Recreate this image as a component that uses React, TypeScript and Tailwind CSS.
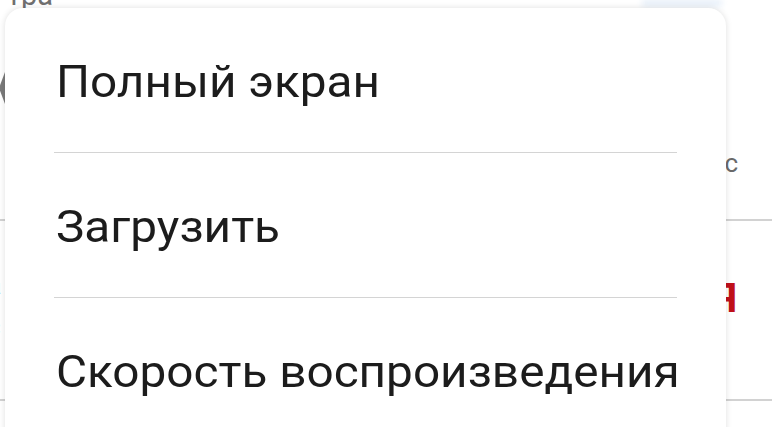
import React from "react";

const items = ["Полный экран", "Загрузить", "Скорость воспроизведения"];

const Background = () => {
  return (
    <div className="w-full h-full flex flex-col">
      {/* upper block */}
      <div className="h-[219px] flex flex-col">
        <div className="flex items-start justify-between h-[12px]">
          <span className="-mt-[22px] ml-[7px] text-[29px] text-[#6f6f6f] leading-[34px]">тра</span>
          <div className="mr-[50px] w-[80px] h-[6px] bg-[#e3edf9] blur-[3px]" />
        </div>
        <div className="flex justify-between mt-[60px]">
          <svg width="8" height="32" viewBox="0 0 8 32" className="-ml-[1px]">
            <polygon points="6,0 0,16 6,32" fill="#7a7a7a" />
          </svg>
        </div>
        <div className="flex justify-end mt-[44px] pr-[34px]">
          <span className="text-[26px] leading-[30px] text-[#6a6a6a]">ос</span>
        </div>
      </div>
      <div className="h-[2px] bg-[#d2d2d2]" />
      {/* lower block */}
      <div className="h-[178px] flex flex-col">
        <div className="flex justify-between items-start mt-[48px]">
          <span className="-ml-[14px] text-[28px] leading-[32px] font-bold text-[#111]">а</span>
          <span className="mt-[8px] mr-[35px] text-[40px] leading-[44px] font-bold text-[#c0101a]">Я</span>
        </div>
        <div className="flex mt-[-10px]">
          <span className="-ml-[14px] text-[28px] leading-[32px] text-[#777]">с</span>
        </div>
      </div>
      <div className="h-[2px] bg-[#d2d2d2]" />
    </div>
  );
};

export default function App() {
  return (
    <div
      className="relative w-[772px] h-[427px] overflow-hidden bg-white"
      style={{ fontFamily: "Roboto, 'Noto Sans', sans-serif" }}
    >
      <Background />
      <div className="absolute left-[5px] top-[8px] w-[721px] h-[450px] bg-white rounded-[18px] shadow-[0_0_6px_rgba(0,0,0,0.13)]">
        {items.map((label, i) => (
          <div key={label}>
            {i > 0 && <div className="mx-[49px] h-px bg-[#d4d4d4]" />}
            <div className="h-[144px] flex items-center pl-[51px] pt-[3px]">
              <span className="inline-block origin-left scale-x-[1.084] text-[44px] leading-none text-[#1c1c1c]">
                {label}
              </span>
            </div>
          </div>
        ))}
      </div>
    </div>
  );
}
